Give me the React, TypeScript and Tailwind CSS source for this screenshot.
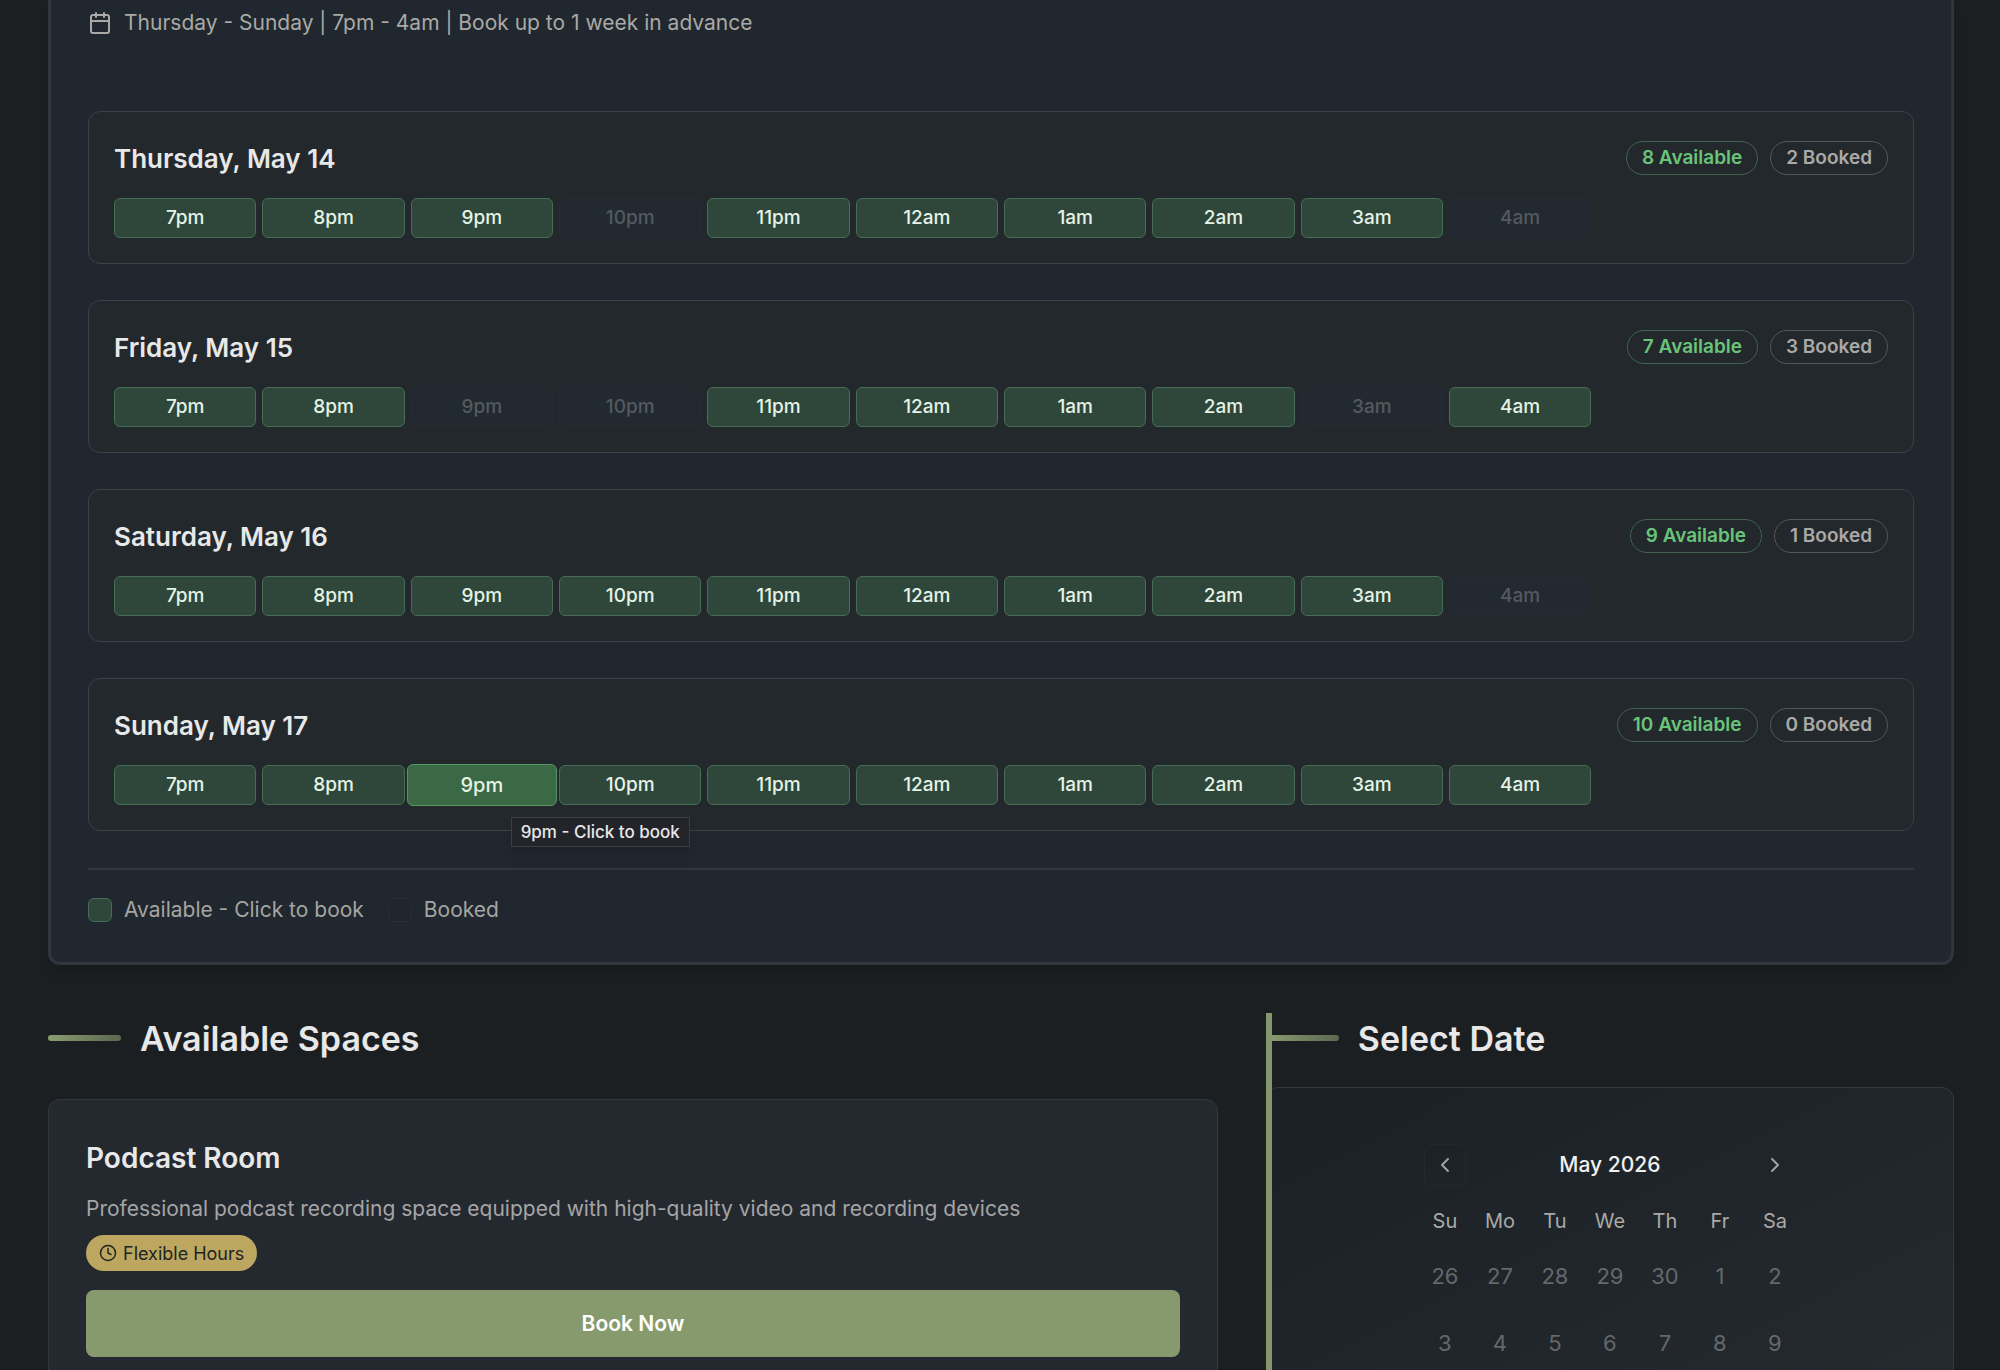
import clsx from 'clsx'
import { Calendar, ChevronLeft, ChevronRight, Clock } from 'lucide-react'

const HOURS = ['7pm', '8pm', '9pm', '10pm', '11pm', '12am', '1am', '2am', '3am', '4am']

interface Day {
  label: string
  booked: string[]
  hovered?: string
}

const DAYS: Day[] = [
  { label: 'Thursday, May 14', booked: ['10pm', '4am'] },
  { label: 'Friday, May 15', booked: ['9pm', '10pm', '3am'] },
  { label: 'Saturday, May 16', booked: ['4am'] },
  { label: 'Sunday, May 17', booked: [], hovered: '9pm' },
]

const WEEKDAYS = ['Su', 'Mo', 'Tu', 'We', 'Th', 'Fr', 'Sa']

const WEEKS = [
  [26, 27, 28, 29, 30, 1, 2],
  [3, 4, 5, 6, 7, 8, 9],
]

function Slot({ hour, booked, hovered }: { hour: string; booked: boolean; hovered: boolean }) {
  return (
    <div className="relative">
      <button
        type="button"
        disabled={booked}
        className={clsx(
          'flex items-center justify-center rounded-md border font-medium',
          booked && 'h-10 w-full border-[#242b33] bg-[#222930] text-[19px] text-[#545a5f]',
          !booked && !hovered && 'h-10 w-full border-[#466e54] bg-[#2f473a] text-[19px] text-[#e4f3e6]',
          hovered && '-mx-1 -my-px h-[42px] w-[calc(100%+8px)] border-[#559663] bg-[#3b6845] text-[20px] text-[#e4f3e6]'
        )}
      >
        {hour}
      </button>
      {hovered && (
        <div
          role="tooltip"
          className="absolute top-[52px] left-[100px] z-10 border border-[#3c4045] bg-[#222429] px-[9px] text-[17px] leading-7 font-medium whitespace-nowrap text-[#e6e7e8] shadow-lg"
        >
          {hour} - Click to book
        </div>
      )}
    </div>
  )
}

function DayCard({ day }: { day: Day }) {
  return (
    <article className="rounded-xl border border-[#3a4147] bg-[#23282c] p-[25px]">
      <div className="mb-[19px] flex h-[42px] items-center justify-between">
        <h3 className="text-[26px] font-semibold text-[#e8e8e8]">{day.label}</h3>
        <div className="flex gap-3 text-[19px] font-semibold">
          <span className="flex h-[34px] items-center rounded-full border border-[#3f6350] px-[15px] text-[#69c47a]">
            {HOURS.length - day.booked.length} Available
          </span>
          <span className="flex h-[34px] items-center rounded-full border border-[#52575c] px-[15px] text-[#aaa9a7]">
            {day.booked.length} Booked
          </span>
        </div>
      </div>
      <div className="grid grid-cols-12 gap-[6px]">
        {HOURS.map(h => (
          <Slot key={h} hour={h} booked={day.booked.includes(h)} hovered={day.hovered === h} />
        ))}
      </div>
    </article>
  )
}

function SectionTitle({ children }: { children: string }) {
  return (
    <h2 className="flex h-[50px] items-center gap-[19px] text-[34px] font-semibold text-[#e8e8e8]">
      <span className="h-[6px] w-[73px] rounded-[3px] bg-linear-to-r from-[#8a9d70] to-[#5b6850]" />
      {children}
    </h2>
  )
}

export default function App() {
  return (
    <main className="h-screen overflow-hidden bg-[#1b1f22] pr-[46px] pl-12 font-['Inter',sans-serif]">
      <section className="rounded-b-xl border-3 border-t-0 border-[#2f363e] bg-[#20272e] px-[37px] pb-[35px] shadow-lg">
        <p className="flex h-[46px] items-center gap-3 text-[21px] text-[#aaa9a5]">
          <Calendar size={24} strokeWidth={2} />
          Thursday - Sunday | 7pm - 4am | Book up to 1 week in advance
        </p>

        <div className="mt-[65px] flex flex-col gap-9">
          {DAYS.map(d => (
            <DayCard key={d.label} day={d} />
          ))}
        </div>

        {/* Legend */}
        <div className="mt-[37px] flex gap-6 border-t-2 border-[#2f363e] pt-[23px] text-[21px] text-[#a5a5a3]">
          <div className="flex h-[34px] items-center gap-3">
            <span className="size-6 rounded-md border border-[#466e54] bg-[#2f473a]" />
            Available - Click to book
          </div>
          <div className="flex h-[34px] items-center gap-3">
            <span className="size-6 rounded-md border border-[#282f37] bg-[#20262d]" />
            Booked
          </div>
        </div>
      </section>

      <div className="mt-12 grid grid-cols-[17fr_10fr] gap-12">
        <section>
          <SectionTitle>Available Spaces</SectionTitle>
          <article className="mt-9 rounded-xl border border-[#31373c] bg-[#242930] px-[37px] pt-9 pb-10">
            <h3 className="text-[28px] leading-[44px] font-semibold text-[#e8e8e8]">Podcast Room</h3>
            <p className="mt-[11px] text-[21px] leading-9 text-[#a5a5a5]">
              Professional podcast recording space equipped with high-quality video and recording devices
            </p>
            <span className="mt-2 flex h-9 w-fit items-center gap-[6px] rounded-full bg-[#bca660] px-[13px] text-[18px] text-[#22241f]">
              <Clock size={18} strokeWidth={2} />
              Flexible Hours
            </span>
            <button
              type="button"
              className="mt-[19px] h-[67px] w-full rounded-lg bg-[#869a6d] text-[21px] font-semibold text-white"
            >
              Book Now
            </button>
          </article>
        </section>

        <aside className="relative">
          <div className="absolute inset-y-0 left-0 z-10 w-[6px] bg-[#84976c]" />
          <SectionTitle>Select Date</SectionTitle>
          <div className="mt-6 flex flex-col items-center rounded-xl border border-[#31373c] bg-linear-to-br from-[#1a2025] to-[#262b30] pt-[55px] pb-16">
            <div className="flex h-[44px] w-[372px] items-center justify-between">
              <button
                type="button"
                aria-label="Previous month"
                className="flex size-[42px] items-center justify-center rounded-md border border-[#23282b] text-[#a2a2a2]"
              >
                <ChevronLeft size={24} strokeWidth={2} />
              </button>
              <span className="text-[21px] font-medium text-[#f0f0f0]">May 2026</span>
              <button
                type="button"
                aria-label="Next month"
                className="flex size-[42px] items-center justify-center rounded-md border border-[#21272b] text-[#a2a2a2]"
              >
                <ChevronRight size={24} strokeWidth={2} />
              </button>
            </div>
            <table className="mt-[15px] w-[385px] table-fixed text-center">
              <thead>
                <tr className="h-[38px] text-[20px] text-[#aaa9a7]">
                  {WEEKDAYS.map(d => (
                    <th key={d} className="font-normal">{d}</th>
                  ))}
                </tr>
              </thead>
              <tbody className="text-[22px] text-[#65686b]">
                {WEEKS.map(week => (
                  <tr key={week[0]} className="h-[67px]">
                    {week.map(n => (
                      <td key={n} className="pt-[9px] pb-[3px]">
                        <button type="button" disabled className="block size-[55px]">{n}</button>
                      </td>
                    ))}
                  </tr>
                ))}
              </tbody>
            </table>
          </div>
        </aside>
      </div>
    </main>
  )
}
